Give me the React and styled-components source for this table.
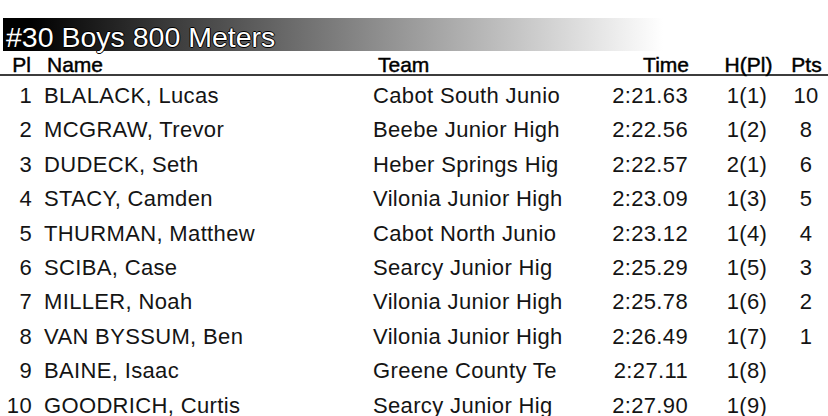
import styled, { createGlobalStyle } from "styled-components";

const results = [
  { pl: 1, name: "BLALACK, Lucas", team: "Cabot South Junio", time: "2:21.63", heat: "1(1)", pts: "10" },
  { pl: 2, name: "MCGRAW, Trevor", team: "Beebe Junior High", time: "2:22.56", heat: "1(2)", pts: "8" },
  { pl: 3, name: "DUDECK, Seth", team: "Heber Springs Hig", time: "2:22.57", heat: "2(1)", pts: "6" },
  { pl: 4, name: "STACY, Camden", team: "Vilonia Junior High", time: "2:23.09", heat: "1(3)", pts: "5" },
  { pl: 5, name: "THURMAN, Matthew", team: "Cabot North Junio", time: "2:23.12", heat: "1(4)", pts: "4" },
  { pl: 6, name: "SCIBA, Case", team: "Searcy Junior Hig", time: "2:25.29", heat: "1(5)", pts: "3" },
  { pl: 7, name: "MILLER, Noah", team: "Vilonia Junior High", time: "2:25.78", heat: "1(6)", pts: "2" },
  { pl: 8, name: "VAN BYSSUM, Ben", team: "Vilonia Junior High", time: "2:26.49", heat: "1(7)", pts: "1" },
  { pl: 9, name: "BAINE, Isaac", team: "Greene County Te", time: "2:27.11", heat: "1(8)", pts: "" },
  { pl: 10, name: "GOODRICH, Curtis", team: "Searcy Junior Hig", time: "2:27.90", heat: "1(9)", pts: "" },
];

const GlobalStyle = createGlobalStyle`
  html, body {
    margin: 0;
    background: #fff;
  }
  body {
    font-family: "Liberation Sans", Arial, Helvetica, sans-serif;
    overflow: hidden;
  }
`;

const Page = styled.div`
  width: 828px;
  height: 416px;
  padding-top: 18px;
  box-sizing: border-box;
  overflow: hidden;
`;

const TitleBar = styled.div`
  margin-left: 3px;
  width: 657px;
  height: 28px;
  padding: 5px 0 0 3px;
  background: linear-gradient(90deg, #000 4%, #3a3a3a 25%, #fff 100%);
  color: #fff;
  font-size: 28.5px;
  line-height: 28px;
  white-space: nowrap;
  text-shadow: 1px 0 0 #000, -1px 0 0 #000, 0 1px 0 #000, 0 -1px 0 #000;
`;

const Grid = styled.div`
  display: grid;
  grid-template-columns: 44px 329px 227px 110px 74px 44px;
  align-items: baseline;
  white-space: nowrap;
`;

const HeaderRow = styled(Grid)`
  height: 19px;
  padding-top: 4px;
  line-height: 19px;
  font-size: 21px;
  color: #000;
  -webkit-text-stroke: 0.45px #000;
  border-bottom: 2px solid #3c3c3c;
`;

const Rows = styled.div`
  padding-top: 3px;
`;

const Row = styled(Grid)`
  height: 34.4px;
  line-height: 34.4px;
  font-size: 22px;
  letter-spacing: 0.35px;
  color: #141414;
`;

const Cell = styled.div`
  text-align: ${({ $align }) => $align || "left"};
  padding-left: ${({ $pl }) => $pl || 0}px;
  padding-right: ${({ $pr }) => $pr || 0}px;
`;

const App = () => (
  <Page>
    <GlobalStyle />
    <TitleBar>#30 Boys 800 Meters</TitleBar>
    <HeaderRow>
      <Cell $align="right" $pr={13}>Pl</Cell>
      <Cell $pl={3}>Name</Cell>
      <Cell $pl={5}>Team</Cell>
      <Cell $align="right" $pr={21}>Time</Cell>
      <Cell $align="center" $pl={3}>H(Pl)</Cell>
      <Cell $align="center" $pl={1}>Pts</Cell>
    </HeaderRow>
    <Rows>
      {results.map((r) => (
        <Row key={r.pl}>
          <Cell $align="right" $pr={12}>{r.pl}</Cell>
          <Cell $pl={0}>{r.name}</Cell>
          <Cell $pl={0}>{r.team}</Cell>
          <Cell $align="right" $pr={22}>{r.time}</Cell>
          <Cell $align="center">{r.heat}</Cell>
          <Cell $align="center">{r.pts}</Cell>
        </Row>
      ))}
    </Rows>
  </Page>
);

export default App;
